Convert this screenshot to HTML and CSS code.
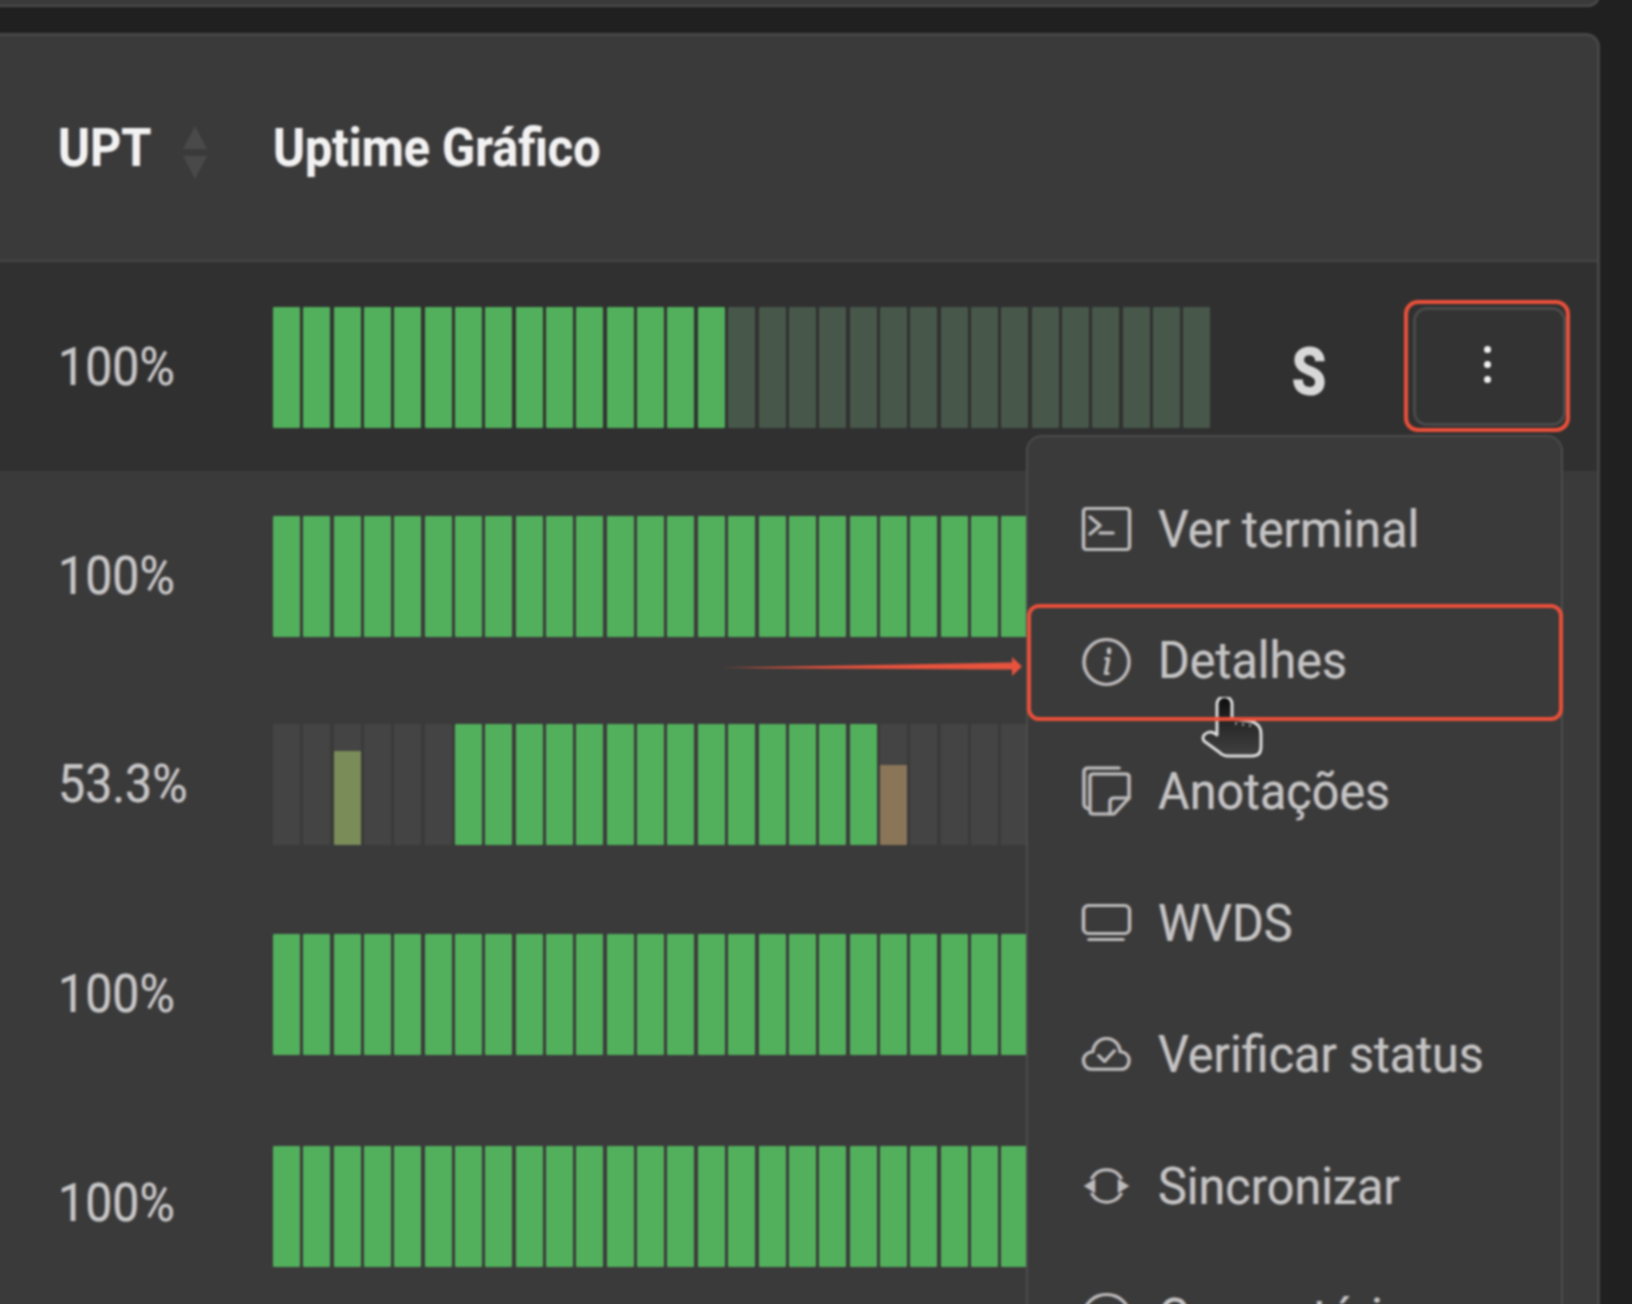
FILE: index.html
```html
<!DOCTYPE html>
<html lang="pt-BR">
<head>
<meta charset="utf-8">
<title>Uptime</title>
<link rel="stylesheet" href="styles.css">
</head>
<body>
<div class="page">
<div class="canvas">
  <div class="prev-card"></div>
  <section class="card">
    <header class="head">
      <div class="head-upt"><span class="txt txt-head">UPT</span>
        <span class="sorter"><i class="tri tri-up"></i><i class="tri tri-down"></i></span>
      </div>
      <div class="txt txt-head">Uptime Gráfico</div>
    </header>
    <div class="rows">
      <div class="row row-active">
        <div class="pct"><span class="txt">100%</span></div>
        <div class="bars">
          <b class="ok"></b><b class="ok"></b><b class="ok"></b><b class="ok"></b><b class="ok"></b><b class="ok"></b><b class="ok"></b><b class="ok"></b><b class="ok"></b><b class="ok"></b><b class="ok"></b><b class="ok"></b><b class="ok"></b><b class="ok"></b><b class="ok"></b>
          <b class="dim"></b><b class="dim"></b><b class="dim"></b><b class="dim"></b><b class="dim"></b><b class="dim"></b><b class="dim"></b><b class="dim"></b><b class="dim"></b><b class="dim"></b><b class="dim"></b><b class="dim"></b><b class="dim"></b><b class="dim"></b><b class="dim"></b><b class="dim"></b>
        </div>
        <div class="grade"><span class="txt">S</span></div>
        <button class="more" type="button"><i></i><i></i><i></i></button>
      </div>
      <div class="row">
        <div class="pct"><span class="txt">100%</span></div>
        <div class="bars">
          <b class="ok"></b><b class="ok"></b><b class="ok"></b><b class="ok"></b><b class="ok"></b><b class="ok"></b><b class="ok"></b><b class="ok"></b><b class="ok"></b><b class="ok"></b><b class="ok"></b><b class="ok"></b><b class="ok"></b><b class="ok"></b><b class="ok"></b><b class="ok"></b><b class="ok"></b><b class="ok"></b><b class="ok"></b><b class="ok"></b><b class="ok"></b><b class="ok"></b><b class="ok"></b><b class="ok"></b><b class="ok"></b><b class="ok"></b><b class="ok"></b><b class="ok"></b><b class="ok"></b><b class="ok"></b><b class="ok"></b>
        </div>
      </div>
      <div class="row">
        <div class="pct"><span class="txt">53.3%</span></div>
        <div class="bars">
          <b></b><b></b><b><u class="olive"></u></b><b></b><b></b><b></b>
          <b class="ok"></b><b class="ok"></b><b class="ok"></b><b class="ok"></b><b class="ok"></b><b class="ok"></b><b class="ok"></b><b class="ok"></b><b class="ok"></b><b class="ok"></b><b class="ok"></b><b class="ok"></b><b class="ok"></b><b class="ok"></b>
          <b><u class="brown"></u></b><b></b><b></b><b></b><b></b><b></b><b></b><b></b><b></b><b></b><b></b>
        </div>
      </div>
      <div class="row">
        <div class="pct"><span class="txt">100%</span></div>
        <div class="bars">
          <b class="ok"></b><b class="ok"></b><b class="ok"></b><b class="ok"></b><b class="ok"></b><b class="ok"></b><b class="ok"></b><b class="ok"></b><b class="ok"></b><b class="ok"></b><b class="ok"></b><b class="ok"></b><b class="ok"></b><b class="ok"></b><b class="ok"></b><b class="ok"></b><b class="ok"></b><b class="ok"></b><b class="ok"></b><b class="ok"></b><b class="ok"></b><b class="ok"></b><b class="ok"></b><b class="ok"></b><b class="ok"></b><b class="ok"></b><b class="ok"></b><b class="ok"></b><b class="ok"></b><b class="ok"></b><b class="ok"></b>
        </div>
      </div>
      <div class="row row-last">
        <div class="pct"><span class="txt">100%</span></div>
        <div class="bars">
          <b class="ok"></b><b class="ok"></b><b class="ok"></b><b class="ok"></b><b class="ok"></b><b class="ok"></b><b class="ok"></b><b class="ok"></b><b class="ok"></b><b class="ok"></b><b class="ok"></b><b class="ok"></b><b class="ok"></b><b class="ok"></b><b class="ok"></b><b class="ok"></b><b class="ok"></b><b class="ok"></b><b class="ok"></b><b class="ok"></b><b class="ok"></b><b class="ok"></b><b class="ok"></b><b class="ok"></b><b class="ok"></b><b class="ok"></b><b class="ok"></b><b class="ok"></b><b class="ok"></b><b class="ok"></b><b class="ok"></b>
        </div>
      </div>
    </div>
  </section>

  <nav class="menu">
    <a class="item">
      <svg class="ico" viewBox="0 0 49 44"><rect x="1.5" y="1.5" width="46" height="41" rx="3"/><path d="M8 10l10 8.5L8 27M18 26h13"/></svg>
      <span class="txt txt-menu">Ver terminal</span>
    </a>
    <a class="item">
      <svg class="ico ico-info" viewBox="0 0 49 48"><circle cx="24.5" cy="24" r="22.5"/><path d="M24 20.500h2.500L23.500 35.500h2.500"/><path class="dot" d="M27 11.500v3"/></svg>
      <span class="txt txt-menu">Detalhes</span>
    </a>
    <a class="item">
      <svg class="ico" viewBox="0 0 49 50"><path d="M37 2H6Q2 2 2 6v32q0 4 5 5"/><path d="M11 8h33q3 0 3 3v21L32 48H11q-3 0-3-3V11q0-3 3-3z"/><path d="M28 48V36q0-4 4-4h15"/></svg>
      <span class="txt txt-menu">Anotações</span>
    </a>
    <a class="item">
      <svg class="ico" viewBox="0 0 49 37"><rect x="1.500" y="1.500" width="46" height="28" rx="5"/><path d="M7 35.500h34"/></svg>
      <span class="txt txt-menu">WVDS</span>
    </a>
    <a class="item">
      <svg class="ico" viewBox="0 0 50 35"><path d="M10 33C4 33 1.500 28 1.500 24c0-5 4.500-9 9.500-9C12 7 18 1.500 25 1.500S38 7 39 15c5 0 9 4 9 9 0 5-3 9-8 9z"/><path d="M17 19l6 6 10-11"/></svg>
      <span class="txt txt-menu">Verificar status</span>
    </a>
    <a class="item">
      <svg class="ico" viewBox="0 0 49 40"><path d="M10 12A17 17 0 0 1 39 12M10 28a17 17 0 0 0 29 0"/><path class="solid" d="M36 13l11 7-11 7zM13 13L2 20l11 7z"/></svg>
      <span class="txt txt-menu">Sincronizar</span>
    </a>
    <a class="item">
      <svg class="ico" viewBox="0 0 49 48"><ellipse cx="24.500" cy="22" rx="22.500" ry="20.500"/></svg>
      <span class="txt txt-menu">Comentários</span>
    </a>
  </nav>

  <svg class="cursor" viewBox="0 0 62 62">
    <defs><linearGradient id="hand" x1="0" y1="0" x2="0" y2="1"><stop offset="0" stop-color="#0c0c0c"/><stop offset=".5" stop-color="#2a2a2a"/><stop offset="1" stop-color="#414141"/></linearGradient></defs>
    <path d="M16 7a7.500 7.500 0 0 1 15 0v15l17 2q12 2 12 13v13q0 9-9 9H27q-5 0-9-4L3 44q-2-3 0-6 6-6 13 0z"/>
    <path class="knuckles" d="M35 25v3M42 26v3M49 27v3"/>
  </svg>

  <svg class="arrow" viewBox="0 0 304 22"><polygon points="0,12 292,6.500 292,1 302,10.500 292,20 292,13.500"/></svg>
  <div class="mark mark-more"></div>
  <div class="mark mark-item"></div>
</div>
</div>
</body>
</html>
```
FILE: styles.css
```css
html, body { margin: 0; background: #202020; }
.page {
  width: 1632px;
  height: 1304px;
  overflow: hidden;
  background: #202020;
  font-family: Roboto, "Liberation Sans", sans-serif;
}
.canvas {
  display: flow-root;
  position: relative;
  height: 1304px;
  filter: blur(0.8px);
}
.prev-card {
  height: 25px;
  width: 1616px;
  margin: -20px 0 0 -20px;
  background: #3a3a3a;
  border: 2px solid #4c4c4c;
  border-top: 0;
  border-radius: 0 0 12px 12px;
}
.card {
  width: 1614px;
  margin: 26px 0 0 -20px;
  background: #3a3a3a;
  border: 3px solid #474747;
  border-bottom: 0;
  border-radius: 14px 14px 0 0;
}
.txt {
  display: inline-block;
  font-size: 48.300px;
  line-height: 48px;
  color: #c6c6c6;
  transform: scaleY(1.11);
  transform-origin: 0 40px;
  white-space: nowrap;
  text-shadow: -1px 0 rgba(90, 160, 255, .35), 1px 0 rgba(255, 150, 70, .35);
}
.txt-head { font-size: 48.600px; color: #f2f2f2; font-weight: 700; }
.txt-menu { font-size: 48.500px; color: #c4c4c4; transform: scaleY(1.07); padding-top: 4px; }
.head {
  display: flex;
  align-items: flex-start;
  height: 226px;
  box-sizing: border-box;
  padding: 90px 0 0 75px;
  border-bottom: 2px solid #454545;
}
.head-upt { display: flex; width: 215px; }
.sorter { display: flex; flex-direction: column; gap: 7px; margin: 0 0 0 32px; }
.tri { display: block; width: 0; height: 0; border-left: 12px solid transparent; border-right: 12px solid transparent; }
.tri-up { border-bottom: 23px solid #4a4a4a; }
.tri-down { border-top: 23px solid #494949; }
.rows {
  display: grid;
  grid-template-rows: 209px 208px 209.5px 212.5px 210px;
}
.row {
  display: flex;
  align-items: flex-start;
  padding: 45px 0 0 75px;
  box-sizing: border-box;
  overflow: hidden;
}
.row-active { background: #303030; overflow: visible; }
.pct { width: 215px; margin-top: 38px; flex: none; }
.row-last .pct { margin-top: 35px; }
.bars {
  display: flex;
  flex: none;
  gap: 3.350px;
  width: 937.500px;
  height: 121px;
}
.bars b {
  position: relative;
  flex: 1;
  background: #444444;
  border-radius: 1px;
}
.bars b.ok { background: #52b05c; }
.bars b.dim { background: #47574a; }
.bars u { position: absolute; left: 0; right: 0; bottom: 0; border-radius: 1px; }
.olive { height: 78%; background: #7a8c58; }
.brown { height: 66%; background: #8a7558; }
.grade { width: 35px; margin: 44px 0 0 81px; flex: none; }
.grade .txt {
  font-size: 56px;
  font-weight: 900;
  line-height: 48px;
  color: #d8d8d8;
  transform: scaleY(1.2);
  text-shadow: none;
}
.more {
  display: flex;
  flex-direction: column;
  align-items: center;
  gap: 8px;
  flex: none;
  width: 153px;
  height: 119px;
  margin: 0 0 0 86px;
  padding: 36px 4px 0 0;
  background: #333333;
  border: 3px solid #4a4a4a;
  border-radius: 14px;
  box-sizing: border-box;
}
.more i { display: block; width: 7px; height: 7px; border-radius: 50%; background: #f0f0f0; }
.menu {
  position: absolute;
  left: 1026px;
  top: 435px;
  width: 537px;
  height: 1000px;
  box-sizing: border-box;
  padding: 26px 0 0 54px;
  background: #3a3a3a;
  border: 2px solid #4c4c4c;
  border-radius: 16px;
}
.item { display: flex; align-items: center; height: 131.400px; gap: 27px; }
.ico {
  flex: none;
  width: 49px;
  fill: none;
  stroke: #bcbcbc;
  stroke-width: 3;
  stroke-linecap: round;
  stroke-linejoin: round;
  filter: drop-shadow(-1px 0 rgba(90, 160, 255, .35)) drop-shadow(1px 0 rgba(255, 150, 70, .35));
}
.ico-info { margin-top: 4px; }
.ico .solid { fill: #bcbcbc; stroke: none; }
.ico .dot { stroke-width: 4; }
.cursor {
  position: absolute;
  left: 1201px;
  top: 697px;
  width: 62px;
  height: 62px;
  fill: url(#hand);
  stroke: #dcdcdc;
  stroke-width: 3;
  stroke-linejoin: round;
}
.cursor .knuckles { stroke: #8c8c8c; stroke-width: 2; fill: none; }
.arrow {
  position: absolute;
  left: 720px;
  top: 656px;
  width: 304px;
  height: 22px;
  fill: #e8533e;
}
.mark {
  position: absolute;
  box-sizing: border-box;
  border: 4px solid #e8503a;
}
.mark-more { left: 1404px; top: 300px; width: 166px; height: 132px; border-radius: 14px; }
.mark-item { left: 1027px; top: 604px; width: 536px; height: 117px; border-radius: 12px; }
```
